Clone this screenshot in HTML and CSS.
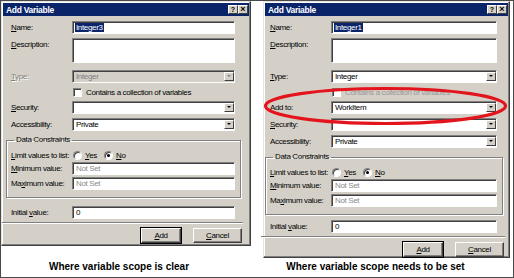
FILE: index.html
```html
<!DOCTYPE html>
<html>
  <head>
    <meta charset="UTF-8" />
    <title>Add Variable</title>
    <link rel="stylesheet" href="styles.css">
  </head>
  <body>
    <div class="sheet">
      <!-- left: dialog without Add to -->
      <div class="dialog">
        <div class="titlebar">
          <span class="title">Add Variable</span>
          <span class="tbtn">?</span>
          <span class="tbtn close">×</span>
        </div>
        <div class="body">
          <div class="row">
            <span class="lbl"><u>N</u>ame:</span>
            <div class="field"><span class="picked">Integer3</span></div>
          </div>
          <div class="row tall">
            <span class="lbl"><u>D</u>escription:</span>
            <div class="field area"></div>
          </div>
          <div class="row off">
            <span class="lbl"><u>T</u>ype:</span>
            <div class="field select">Integer<i class="drop"></i></div>
          </div>
          <div class="row check">
            <span class="lbl"></span>
            <span class="box"></span>
            <span>Contains a collection of variables</span>
          </div>
          <div class="row">
            <span class="lbl"><u>S</u>ecurity:</span>
            <div class="field select"><i class="drop"></i></div>
          </div>
          <div class="row">
            <span class="lbl">Accessibility:</span>
            <div class="field select">Private<i class="drop"></i></div>
          </div>
          <fieldset class="group">
            <legend>Data Constraints</legend>
            <div class="row radios">
              <span class="lbl"><u>L</u>imit values to list:</span>
              <span class="radio"></span><span class="opt"><u>Y</u>es</span>
              <span class="radio on"></span><span class="opt"><u>N</u>o</span>
            </div>
            <div class="row">
              <span class="lbl"><u>M</u>inimum value:</span>
              <div class="field muted">Not Set</div>
            </div>
            <div class="row">
              <span class="lbl">Ma<u>x</u>imum value:</span>
              <div class="field muted">Not Set</div>
            </div>
          </fieldset>
          <div class="row initial">
            <span class="lbl">Initial <u>v</u>alue:</span>
            <div class="field">0</div>
          </div>
          <div class="sep"></div>
          <div class="buttons">
            <span class="btn primary"><u>A</u>dd</span>
            <span class="btn"><u>C</u>ancel</span>
          </div>
        </div>
      </div>

      <!-- right: dialog with Add to -->
      <div class="dialog wide">
        <div class="titlebar">
          <span class="title">Add Variable</span>
          <span class="tbtn">?</span>
          <span class="tbtn close">×</span>
        </div>
        <div class="body">
          <div class="row">
            <span class="lbl"><u>N</u>ame:</span>
            <div class="field"><span class="picked">Integer1</span></div>
          </div>
          <div class="row tall">
            <span class="lbl"><u>D</u>escription:</span>
            <div class="field area"></div>
          </div>
          <div class="row">
            <span class="lbl"><u>T</u>ype:</span>
            <div class="field select">Integer<i class="drop"></i></div>
          </div>
          <div class="row check faded">
            <span class="lbl"></span>
            <span class="box"></span>
            <span>Contains a collection of variables</span>
          </div>
          <div class="row">
            <span class="lbl">Add to:</span>
            <div class="field select">WorkItem<i class="drop"></i></div>
          </div>
          <div class="row">
            <span class="lbl"><u>S</u>ecurity:</span>
            <div class="field select"><i class="drop"></i></div>
          </div>
          <div class="row">
            <span class="lbl">Accessibility:</span>
            <div class="field select">Private<i class="drop"></i></div>
          </div>
          <fieldset class="group">
            <legend>Data Constraints</legend>
            <div class="row radios">
              <span class="lbl"><u>L</u>imit values to list:</span>
              <span class="radio"></span><span class="opt"><u>Y</u>es</span>
              <span class="radio on"></span><span class="opt"><u>N</u>o</span>
            </div>
            <div class="row">
              <span class="lbl"><u>M</u>inimum value:</span>
              <div class="field muted">Not Set</div>
            </div>
            <div class="row">
              <span class="lbl">Ma<u>x</u>imum value:</span>
              <div class="field muted">Not Set</div>
            </div>
          </fieldset>
          <div class="row initial">
            <span class="lbl">Initial <u>v</u>alue:</span>
            <div class="field">0</div>
          </div>
          <div class="sep"></div>
          <div class="buttons">
            <span class="btn primary"><u>A</u>dd</span>
            <span class="btn"><u>C</u>ancel</span>
          </div>
        </div>
      </div>

      <p class="caption">Where variable scope is clear</p>
      <p class="caption right">Where variable scope needs to be set</p>

      <svg class="mark" width="512" height="276" viewBox="0 0 512 276">
        <ellipse cx="384.5" cy="105" rx="120" ry="17.5" fill="none" stroke="#e3141c" stroke-width="3.2" />
      </svg>
    </div>
  </body>
</html>
```

FILE: styles.css
```css
body {
  margin: 0;
  background-color: white;
}

.sheet {
  position: relative;
  box-sizing: border-box;
  width: 514px;
  height: 278px;
  border: 1px solid #4a4a4a;
  background-color: white;
  display: grid;
  grid-template-columns: 250px 247px;
  grid-template-rows: 257px auto;
  column-gap: 12px;
  align-items: start;
}

.dialog {
  box-sizing: border-box;
  background-color: #d4d0c8;
  border: 1px solid;
  border-color: #e6e4df #404040 #404040 #e6e4df;
  box-shadow: inset -1px -1px #808080, inset 1px 1px #fff;
  font-family: "Liberation Sans", sans-serif;
  font-size: 8px;
  letter-spacing: -0.35px;
  color: black;
}

.titlebar {
  height: 13px;
  margin: 1px 1px 0 1px;
  padding: 0 1px 0 3px;
  background-color: #0a246a;
  color: white;
  display: flex;
  align-items: center;
}

.title {
  flex: 1;
  font-weight: bold;
  font-size: 8.5px;
  letter-spacing: -0.3px;
}

.tbtn {
  box-sizing: border-box;
  width: 10px;
  height: 9px;
  background-color: #d4d0c8;
  border: 1px solid;
  border-color: #fff #404040 #404040 #fff;
  color: black;
  font-family: "Liberation Sans", sans-serif;
  font-weight: bold;
  font-size: 7px;
  line-height: 7px;
  letter-spacing: 0;
  text-align: center;
}

.tbtn.close {
  font-size: 9px;
}

.body {
  padding: 5px 15px 2px 9px;
}

.wide .body {
  padding: 5px 12px 0 6px;
}

.row {
  display: flex;
  align-items: center;
  height: 13px;
  margin-bottom: 4px;
}

.lbl {
  width: 61px;
  flex: none;
  white-space: nowrap;
}

.field {
  box-sizing: border-box;
  flex: 1;
  height: 13px;
  background-color: white;
  border: 1px solid;
  border-color: #808080 #fff #fff #808080;
  box-shadow: inset 1px 1px #404040;
  padding-left: 3px;
  display: flex;
  align-items: center;
  white-space: nowrap;
}

.picked {
  background-color: #0a246a;
  color: white;
  line-height: 9px;
  padding: 0 1px;
  margin-left: -1px;
}

.row.tall {
  height: 25px;
  align-items: flex-start;
  margin-bottom: 7px;
}

.row.tall .lbl {
  margin-top: 2px;
}

.field.area {
  height: 25px;
}

.drop {
  box-sizing: border-box;
  position: relative;
  width: 10px;
  height: 9px;
  margin-left: auto;
  background-color: #d4d0c8;
  border: 1px solid;
  border-color: #fff #404040 #404040 #fff;
}

.drop::after {
  content: "";
  position: absolute;
  left: 2px;
  top: 2px;
  border-left: 2px solid transparent;
  border-right: 2px solid transparent;
  border-top: 2px solid black;
}

.row.off .lbl {
  color: #808080;
  text-shadow: 1px 1px #fff;
}

.row.off .field {
  background-color: #d4d0c8;
  color: #808080;
}

.row.off .drop::after {
  border-top-color: #808080;
}

.row.check {
  height: 10px;
}

.box {
  box-sizing: border-box;
  width: 9px;
  height: 9px;
  margin-left: 1px;
  margin-right: 4px;
  background-color: white;
  border: 1px solid;
  border-color: #808080 #fff #fff #808080;
  box-shadow: inset 1px 1px #404040;
}

.row.faded {
  color: #9a9a9a;
}

.group {
  margin: 0 -6px 0 -5px;
  padding: 5px 5px 5px 4px;
  border: 1px solid #808080;
  box-shadow: inset 1px 1px #fff, 1px 1px #fff;
}

.group legend {
  padding: 0 2px;
  margin-left: 3px;
  line-height: 10px;
}

.row.radios {
  height: 11px;
  margin-bottom: 1px;
}

.group .row:last-child {
  margin-bottom: 0;
}

.group .row + .row {
  margin-bottom: 2px;
}

.radio {
  box-sizing: border-box;
  position: relative;
  width: 9px;
  height: 9px;
  margin-left: 1px;
  margin-right: 3px;
  border-radius: 50%;
  background-color: white;
  border: 1px solid;
  border-color: #808080 #fff #fff #808080;
  box-shadow: inset 1px 1px #404040;
}

.radio.on::after {
  content: "";
  position: absolute;
  left: 2px;
  top: 2px;
  width: 3px;
  height: 3px;
  border-radius: 50%;
  background-color: black;
}

.opt {
  width: 18px;
}

.field.muted {
  color: #8a8a8a;
}

.row.initial {
  margin-top: 8px;
  margin-bottom: 3px;
}

.wide .row.initial {
  margin-top: 5px;
}

.sep {
  height: 0;
  margin: 0 -8px 4px -9px;
  border-top: 1px solid #808080;
  border-bottom: 1px solid #fff;
}

.buttons {
  display: flex;
  justify-content: flex-end;
  gap: 12px;
  margin-right: -7px;
}

.btn {
  box-sizing: border-box;
  width: 49px;
  height: 15px;
  background-color: #d4d0c8;
  border: 1px solid;
  border-color: #fff #404040 #404040 #fff;
  box-shadow: inset -1px -1px #808080;
  display: flex;
  align-items: center;
  justify-content: center;
}

.btn.primary {
  width: 40px;
  outline: 1px solid black;
}

.caption {
  margin: 3px 0 0 0;
  padding-right: 14px;
  font-family: "Liberation Sans", Arial, sans-serif;
  font-weight: bold;
  font-size: 10px;
  line-height: 12px;
  text-align: center;
  color: black;
}

.caption.right {
  padding-right: 22px;
}

.mark {
  position: absolute;
  left: 0;
  top: 0;
  pointer-events: none;
}
```
